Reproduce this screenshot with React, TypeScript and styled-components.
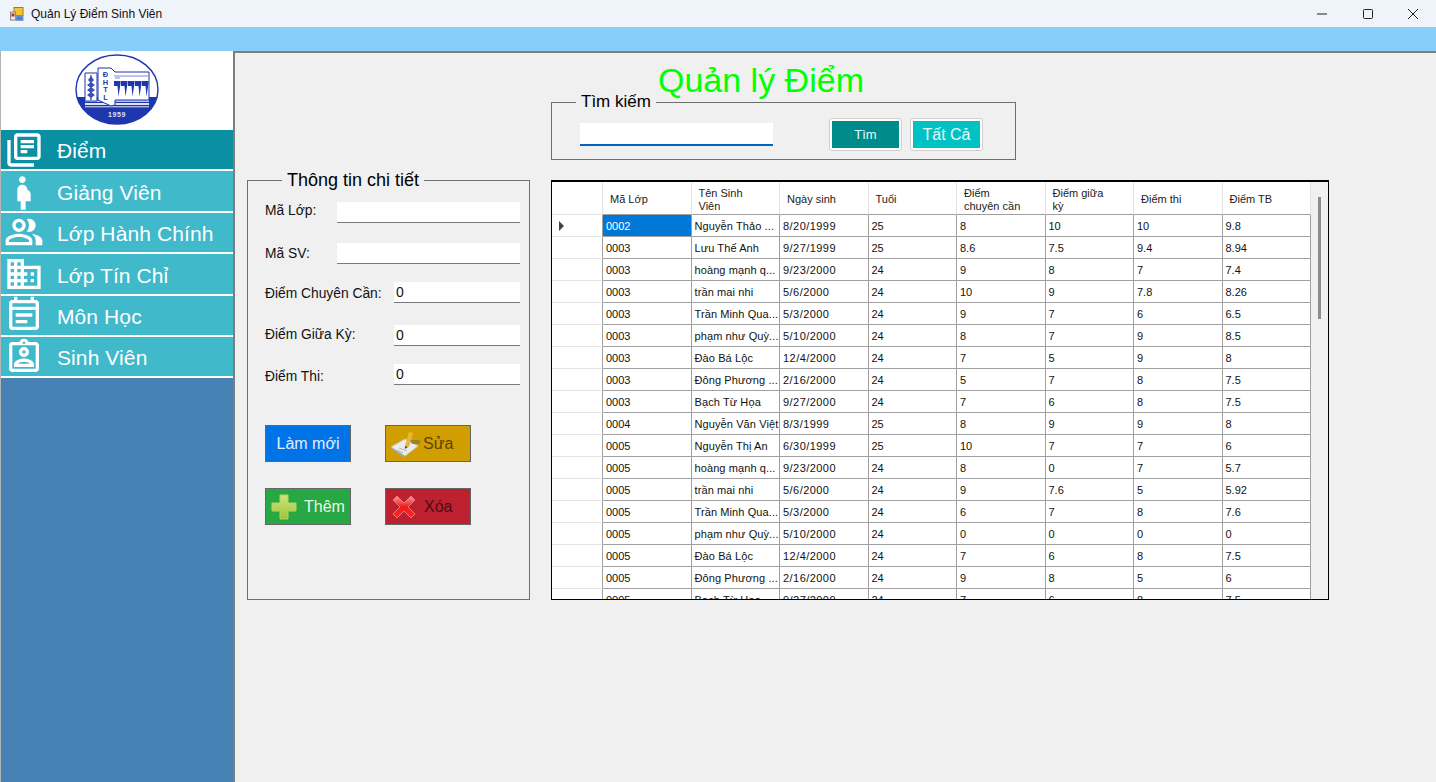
import React from "react";
import styled, { createGlobalStyle } from "styled-components";
import {
  MdOutlineLibraryBooks,
  MdPregnantWoman,
  MdOutlinePeopleAlt,
  MdDomain,
  MdOutlineEventNote,
  MdOutlineAssignmentInd,
} from "react-icons/md";

const Global = createGlobalStyle`
  html, body { margin: 0; padding: 0; height: 100%; overflow: hidden; }
  body { font-family: "Liberation Sans", Arial, sans-serif; background: #f0f0f0; }
  * { box-sizing: border-box; }
`;

const Win = styled.div`
  width: 1436px;
  height: 782px;
  display: flex;
  flex-direction: column;
  overflow: hidden;
`;
const TitleBar = styled.header`
  height: 27px;
  flex: none;
  background: #eff3fa;
  display: flex;
  align-items: center;
  padding-left: 10px;
  color: #111;
  font-size: 12px;
`;
const TitleText = styled.span`
  margin-left: 7px;
  flex: 1;
`;
const WinBtn = styled.div`
  width: 45.5px;
  height: 27px;
  display: flex;
  align-items: center;
  justify-content: center;
`;
const Band = styled.div`
  height: 24px;
  flex: none;
  background: #87cefa;
`;
const Body = styled.div`
  flex: 1;
  display: flex;
  min-height: 0;
  background: #b4b4b4;
`;
const Sidebar = styled.nav`
  width: 233px;
  flex: none;
  margin-left: 1px;
  background: #4682b4;
  display: flex;
  flex-direction: column;
`;
const LogoBox = styled.div`
  height: 79px;
  background: #fff;
  display: flex;
  justify-content: center;
  padding: 3px 2px 0 0;
  flex: none;
`;
const MenuItem = styled.div<{ $active?: boolean }>`
  height: 41.4px;
  flex: none;
  border-bottom: 2px solid #fff;
  background: ${(p) => (p.$active ? "#0a8fa3" : "#40b9cb")};
  color: #fff;
  display: flex;
  align-items: center;
  font-size: 21px;
  letter-spacing: 0.1px;
`;
const MenuIcon = styled.span<{ $dy: number }>`
  width: 47px;
  margin-left: 3px;
  margin-right: 6px;
  height: 40px;
  padding-top: ${(p) => p.$dy}px;
  display: flex;
  align-items: center;
  font-size: 40px;
`;
const MenuLabel = styled.span<{ $dy: number }>`
  padding-top: ${(p) => p.$dy}px;
`;
const Main = styled.main`
  flex: 1;
  min-width: 0;
  margin-left: -1px;
  border-top: 2px solid #7d7d7d;
  border-left: 2px solid #7d7d7d;
  background: #f0f0f0;
  display: flex;
  align-items: flex-start;
  padding: 0 0 0 12px;
`;
const LeftCol = styled.div`
  width: 283px;
  margin-top: 117px;
  flex: none;
`;
const RightCol = styled.div`
  margin-left: 21px;
  width: 778px;
  flex: none;
`;
const PageTitle = styled.h1`
  margin: 13px 0 0 107px;
  height: 26px;
  line-height: 28px;
  font-size: 34px;
  font-weight: 400;
  color: #00ff00;
  white-space: nowrap;
`;
const Group = styled.fieldset<{ $h: number; $w: number }>`
  margin: 0;
  padding: 0;
  min-width: 0;
  border: 1px solid #6e6e6e;
  width: ${(p) => p.$w}px;
  height: ${(p) => p.$h}px;
`;
const GroupTitle = styled.legend<{ $left: number; $size: number }>`
  margin-left: ${(p) => p.$left}px;
  padding: 0 5px;
  font-size: ${(p) => p.$size}px;
  line-height: 20px;
  height: 20px;
  color: #000;
`;
const SearchRow = styled.div`
  display: flex;
  align-items: flex-start;
  padding: 6px 0 0 28px;
`;
const SearchInput = styled.input`
  width: 193px;
  height: 23px;
  margin-top: 5px;
  margin-right: 56px;
  border: 0;
  border-bottom: 2px solid #0067c0;
  background: #fff;
  outline: none;
  padding: 0;
`;
const RingBtn = styled.div`
  width: 73px;
  height: 33px;
  margin-right: 8px;
  border: 1px solid #cfcfcf;
  border-radius: 3px;
  background: #fff;
  padding: 2px;
  display: flex;
`;
const RingFace = styled.div<{ $bg: string; $size: number }>`
  flex: 1;
  background: ${(p) => p.$bg};
  color: #e9fbfb;
  font-size: ${(p) => p.$size}px;
  display: flex;
  align-items: center;
  justify-content: center;
`;
const GridBox = styled.div`
  margin-top: 20px;
  width: 778px;
  height: 420px;
  border: 1px solid #000;
  border-top-width: 2px;
  background: #f0f0f0;
  display: flex;
  overflow: hidden;
`;
const Table = styled.div`
  flex: none;
  width: 759px;
  display: grid;
  grid-template-columns: 51px repeat(8, 88.5px);
  grid-auto-rows: 22px;
  grid-template-rows: 33px;
  background: #fff;
  font-size: 11px;
  color: #111;
`;
const HeadCell = styled.div<{ $corner?: boolean }>`
  border-right: 1px solid #e4e4e4;
  border-bottom: 1px solid ${(p) => (p.$corner ? "#e4e4e4" : "#a0a0a0")};
  padding: 3px 0 0 7px;
  display: flex;
  align-items: center;
  line-height: 13px;
  font-size: 11px;
  white-space: pre-line;
  color: #222;
`;
const RowHead = styled.div`
  border-right: 1px solid #a0a0a0;
  border-bottom: 1px solid #e4e4e4;
  display: flex;
  align-items: center;
  padding-left: 7px;
`;
const Arrow = styled.div`
  width: 0;
  height: 0;
  border-left: 5px solid #404040;
  border-top: 5px solid transparent;
  border-bottom: 5px solid transparent;
`;
const Cell = styled.div<{ $sel?: boolean; $tight?: boolean; $date?: boolean }>`
  border-right: 1px solid #a0a0a0;
  border-bottom: 1px solid #a0a0a0;
  background: ${(p) => (p.$sel ? "#0078d7" : "#fff")};
  color: ${(p) => (p.$sel ? "#fff" : "#111")};
  padding-left: 3px;
  letter-spacing: ${(p) => (p.$date ? "0.45px" : p.$tight ? "0.1px" : "0")};
  display: flex;
  align-items: center;
  white-space: nowrap;
  overflow: hidden;
`;
const ScrollArea = styled.div`
  flex: 1;
`;
const Thumb = styled.div`
  width: 3px;
  height: 122px;
  margin: 15px 0 0 7px;
  background: #8d8d8d;
`;
const FormRow = styled.div<{ $mt: number }>`
  display: flex;
  align-items: center;
  justify-content: space-between;
  margin-top: ${(p) => p.$mt}px;
  padding: 0 9px 0 17px;
  height: 21px;
  font-size: 13.8px;
  color: #111;
`;
const FormLabel = styled.span<{ $dy: number }>`
  padding-top: ${(p) => (p.$dy > 0 ? p.$dy * 2 : 0)}px;
  padding-bottom: ${(p) => (p.$dy < 0 ? -p.$dy * 2 : 0)}px;
`;
const FormInput = styled.input<{ $w: number }>`
  width: ${(p) => p.$w}px;
  height: 21px;
  border: 0;
  border-bottom: 1px solid #7a7a7a;
  background: #fff;
  padding: 0 2px;
  font-family: inherit;
  font-size: 14px;
  color: #111;
  outline: none;
`;
const Actions = styled.div`
  display: grid;
  grid-template-columns: 86px 86px;
  column-gap: 34px;
  row-gap: 26px;
  margin: 40px 0 0 17px;
`;
const ActionBtn = styled.div<{ $bg: string; $fg: string; $center?: boolean; $gap?: number; $left?: number }>`
  height: 37px;
  background: ${(p) => p.$bg};
  color: ${(p) => p.$fg};
  border: 1px solid #666;
  font-size: 16px;
  display: flex;
  align-items: center;
  justify-content: ${(p) => (p.$center ? "center" : "flex-start")};
  padding: 1px 0 0 ${(p) => (p.$center ? 0 : (p.$left ?? 4))}px;
  gap: ${(p) => p.$gap ?? 5}px;
`;

const AppIcon = () => (
  <svg width="14" height="14" viewBox="0 0 14 14">
    <rect x="4" y="0.5" width="9" height="8" fill="#f5c431" stroke="#a77b10" />
    <rect x="0.5" y="5" width="5" height="8" fill="#e9e9e9" stroke="#888" />
    <rect x="1.5" y="6.5" width="3" height="3" fill="#d42222" />
    <rect x="6" y="9" width="7" height="4.5" fill="#4a7fd1" stroke="#7c9ed1" />
  </svg>
);

const Logo = () => (
  <svg width="84" height="72" viewBox="0 0 84 72">
    <defs>
      <clipPath id="oval">
        <ellipse cx="42" cy="35.5" rx="41" ry="34.5" />
      </clipPath>
    </defs>
    <ellipse cx="42" cy="35.5" rx="41" ry="34.5" fill="#fff" stroke="#1e37ae" strokeWidth="1.4" />
    <g clipPath="url(#oval)">
      <rect x="0" y="43" width="84" height="30" fill="#1e37ae" />
      <rect x="10" y="46" width="64" height="2" fill="#b9c3ea" />
      <rect x="10" y="49" width="64" height="2" fill="#dfe3f5" />
      <rect x="10" y="52" width="64" height="1.4" fill="#aeb8e6" />
    </g>
    <path d="M10 19h12v28H10z" fill="#fff" stroke="#1e37ae" strokeWidth="1" />
    <path d="M16 21v25" stroke="#1e37ae" strokeWidth="1.2" />
    <path d="M16 22l-3 4 3 3 3-3zM16 28l-4 3 4 3 4-3zM16 33l-4 3 4 3 4-3zM16 38l-4 3 4 3 4-3z" fill="#3a4fb8" />
    <path d="M23 14h13l4 4h34v28H40v5l-4 1-13-6z" fill="#fff" stroke="#1e37ae" strokeWidth="1" />
    <g fontFamily="Liberation Sans, sans-serif" fontSize="7.5" fontWeight="700" fill="#1e37ae" textAnchor="middle">
      <text x="30.5" y="23">Đ</text>
      <text x="30.5" y="30.5">H</text>
      <text x="30.5" y="38">T</text>
      <text x="30.5" y="45.5">L</text>
    </g>
    <path d="M39 22h34M40 24h5" stroke="#5a6cc8" strokeWidth="0.8" />
    <path
      d="M39 27h6.5v2.5l-2 13-1-10.500h-3.500zM46 27h6.500v2.500l-2 13-1-10.500h-3.500zM53 27h6.500v2.500l-2 13-1-10.500h-3.500zM60 27h6.500v2.500l-2 13-1-10.500h-3.500zM67 27h6.500v2.500l-2 13-1-10.500h-3.500z"
      fill="#1e37ae"
    />
    <text x="42" y="63" textAnchor="middle" fontFamily="Liberation Sans, sans-serif" fontSize="7" fontWeight="700" fill="#dfe3f5" letterSpacing="0.6">
      1959
    </text>
  </svg>
);

const EditIcon = () => (
  <svg width="30" height="30" viewBox="0 0 30 30">
    <path d="M1 18 15 10l13 7-13 10z" fill="#ececec" stroke="#c9c9c0" strokeLinejoin="round" />
    <path d="M1 18l13 9v2L1 20z" fill="#a5a59a" />
    <path d="M15 17 19 3l4 1-4 14z" fill="#e9b63a" />
    <path d="M15 17l0 3 3-2z" fill="#5a4a20" />
    <path d="M20 11h10v4h-8z" fill="#8b7a38" opacity=".8" />
    <path d="M9 19l8 3M7 21l6 3" stroke="#b5b5b5" />
  </svg>
);
const PlusIcon = () => (
  <svg width="26" height="26" viewBox="0 0 26 26">
    <defs>
      <linearGradient id="pg" x1="0" y1="0" x2="0" y2="1">
        <stop offset="0" stopColor="#cfe37a" />
        <stop offset="1" stopColor="#9bc53d" />
      </linearGradient>
    </defs>
    <path d="M9 1h8v8h8v8h-8v8H9v-8H1V9h8z" fill="url(#pg)" stroke="#b6d45d" strokeLinejoin="round" />
  </svg>
);
const CrossIcon = () => (
  <svg width="26" height="26" viewBox="0 0 26 26">
    <defs>
      <linearGradient id="xg" x1="0" y1="0" x2="0" y2="1">
        <stop offset="0" stopColor="#f2a0a0" />
        <stop offset="0.5" stopColor="#f01818" />
        <stop offset="1" stopColor="#ff2a2a" />
      </linearGradient>
    </defs>
    <path d="M2 6l4-4 7 7 7-7 4 4-7 7 7 7-4 4-7-7-7 7-4-4 7-7z" fill="url(#xg)" stroke="#e77" strokeLinejoin="round" />
  </svg>
);

const menu = [
  { label: "Điểm", icon: <MdOutlineLibraryBooks />, active: true, textDy: 2, iconDy: 0 },
  { label: "Giảng Viên", icon: <MdPregnantWoman />, textDy: 4, iconDy: 3 },
  { label: "Lớp Hành Chính", icon: <MdOutlinePeopleAlt />, textDy: 4, iconDy: 0 },
  { label: "Lớp Tín Chỉ", icon: <MdDomain />, textDy: 4, iconDy: 1 },
  { label: "Môn Học", icon: <MdOutlineEventNote />, textDy: 4, iconDy: 0 },
  { label: "Sinh Viên", icon: <MdOutlineAssignmentInd />, textDy: 2, iconDy: 0 },
];

const headers = ["Mã Lớp", "Tên Sinh\nViên", "Ngày sinh", "Tuổi", "Điểm\nchuyên cần", "Điểm giữa\nkỳ", "Điểm thi", "Điểm TB"];

const rows: string[][] = [
  ["0002", "Nguyễn Thảo ...", "8/20/1999", "25", "8", "10", "10", "9.8"],
  ["0003", "Lưu Thế Anh", "9/27/1999", "25", "8.6", "7.5", "9.4", "8.94"],
  ["0003", "hoàng mạnh q...", "9/23/2000", "24", "9", "8", "7", "7.4"],
  ["0003", "trần mai nhi", "5/6/2000", "24", "10", "9", "7.8", "8.26"],
  ["0003", "Trần Minh Qua...", "5/3/2000", "24", "9", "7", "6", "6.5"],
  ["0003", "phạm như Quỳ...", "5/10/2000", "24", "8", "7", "9", "8.5"],
  ["0003", "Đào Bá Lộc", "12/4/2000", "24", "7", "5", "9", "8"],
  ["0003", "Đông Phương ...", "2/16/2000", "24", "5", "7", "8", "7.5"],
  ["0003", "Bạch Từ Họa", "9/27/2000", "24", "7", "6", "8", "7.5"],
  ["0004", "Nguyễn Văn Việt", "8/3/1999", "25", "8", "9", "9", "8"],
  ["0005", "Nguyễn Thị An", "6/30/1999", "25", "10", "7", "7", "6"],
  ["0005", "hoàng mạnh q...", "9/23/2000", "24", "8", "0", "7", "5.7"],
  ["0005", "trần mai nhi", "5/6/2000", "24", "9", "7.6", "5", "5.92"],
  ["0005", "Trần Minh Qua...", "5/3/2000", "24", "6", "7", "8", "7.6"],
  ["0005", "phạm như Quỳ...", "5/10/2000", "24", "0", "0", "0", "0"],
  ["0005", "Đào Bá Lộc", "12/4/2000", "24", "7", "6", "8", "7.5"],
  ["0005", "Đông Phương ...", "2/16/2000", "24", "9", "8", "5", "6"],
  ["0005", "Bạch Từ Họa", "9/27/2000", "24", "7", "6", "8", "7.5"],
];

export default function App() {
  return (
    <Win>
      <Global />
      <TitleBar>
        <AppIcon />
        <TitleText>Quản Lý Điểm Sinh Viên</TitleText>
        <WinBtn>
          <svg width="12" height="12" viewBox="0 0 12 12"><path d="M1 6h10" stroke="#222" strokeWidth="1" /></svg>
        </WinBtn>
        <WinBtn>
          <svg width="12" height="12" viewBox="0 0 12 12"><rect x="1.5" y="1.5" width="9" height="9" rx="1" fill="none" stroke="#222" /></svg>
        </WinBtn>
        <WinBtn>
          <svg width="12" height="12" viewBox="0 0 12 12"><path d="M1 1l10 10M11 1 1 11" stroke="#222" /></svg>
        </WinBtn>
      </TitleBar>
      <Band />
      <Body>
        <Sidebar>
          <LogoBox><Logo /></LogoBox>
          {menu.map((m) => (
            <MenuItem key={m.label} $active={m.active}>
              <MenuIcon $dy={m.iconDy}>{m.icon}</MenuIcon>
              <MenuLabel $dy={m.textDy}>{m.label}</MenuLabel>
            </MenuItem>
          ))}
        </Sidebar>
        <Main>
          <LeftCol>
            <Group $w={283} $h={430}>
              <GroupTitle $left={34} $size={18}>Thông tin chi tiết</GroupTitle>
              <FormRow $mt={12}><FormLabel $dy={-2}>Mã Lớp:</FormLabel><FormInput $w={183} readOnly /></FormRow>
              <FormRow $mt={20}><FormLabel $dy={0}>Mã SV:</FormLabel><FormInput $w={183} readOnly /></FormRow>
              <FormRow $mt={18}><FormLabel $dy={1}>Điểm Chuyên Cần:</FormLabel><FormInput $w={126} readOnly value="0" /></FormRow>
              <FormRow $mt={22}><FormLabel $dy={-1}>Điểm Giữa Kỳ:</FormLabel><FormInput $w={126} readOnly value="0" /></FormRow>
              <FormRow $mt={18}><FormLabel $dy={2}>Điểm Thi:</FormLabel><FormInput $w={126} readOnly value="0" /></FormRow>
              <Actions>
                <ActionBtn $bg="#0073e6" $fg="#e6ecff" $center>Làm mới</ActionBtn>
                <ActionBtn $bg="#d19e00" $fg="#5c4300" $gap={3}><EditIcon />Sửa</ActionBtn>
                <ActionBtn $bg="#28a745" $fg="#eef9e6" $left={5} $gap={7}><PlusIcon />Thêm</ActionBtn>
                <ActionBtn $bg="#bd2130" $fg="#4d0b14" $left={5} $gap={7}><CrossIcon />Xóa</ActionBtn>
              </Actions>
            </Group>
          </LeftCol>
          <RightCol>
            <PageTitle>Quản lý Điểm</PageTitle>
            <Group $w={465} $h={68}>
              <GroupTitle $left={24} $size={17}>Tìm kiếm</GroupTitle>
              <SearchRow>
                <SearchInput readOnly />
                <RingBtn><RingFace $bg="#008b8b" $size={13}>Tìm</RingFace></RingBtn>
                <RingBtn><RingFace $bg="#00c2c2" $size={16}>Tất Cả</RingFace></RingBtn>
              </SearchRow>
            </Group>
            <GridBox>
              <Table>
                <HeadCell $corner />
                {headers.map((h) => (
                  <HeadCell key={h}>{h}</HeadCell>
                ))}
                {rows.map((r, i) => (
                  <React.Fragment key={i}>
                    <RowHead>{i === 0 && <Arrow />}</RowHead>
                    {r.map((c, j) => (
                      <Cell key={j} $sel={i === 0 && j === 0} $tight={j === 1} $date={j === 2}>{c}</Cell>
                    ))}
                  </React.Fragment>
                ))}
              </Table>
              <ScrollArea><Thumb /></ScrollArea>
            </GridBox>
          </RightCol>
        </Main>
      </Body>
    </Win>
  );
}
